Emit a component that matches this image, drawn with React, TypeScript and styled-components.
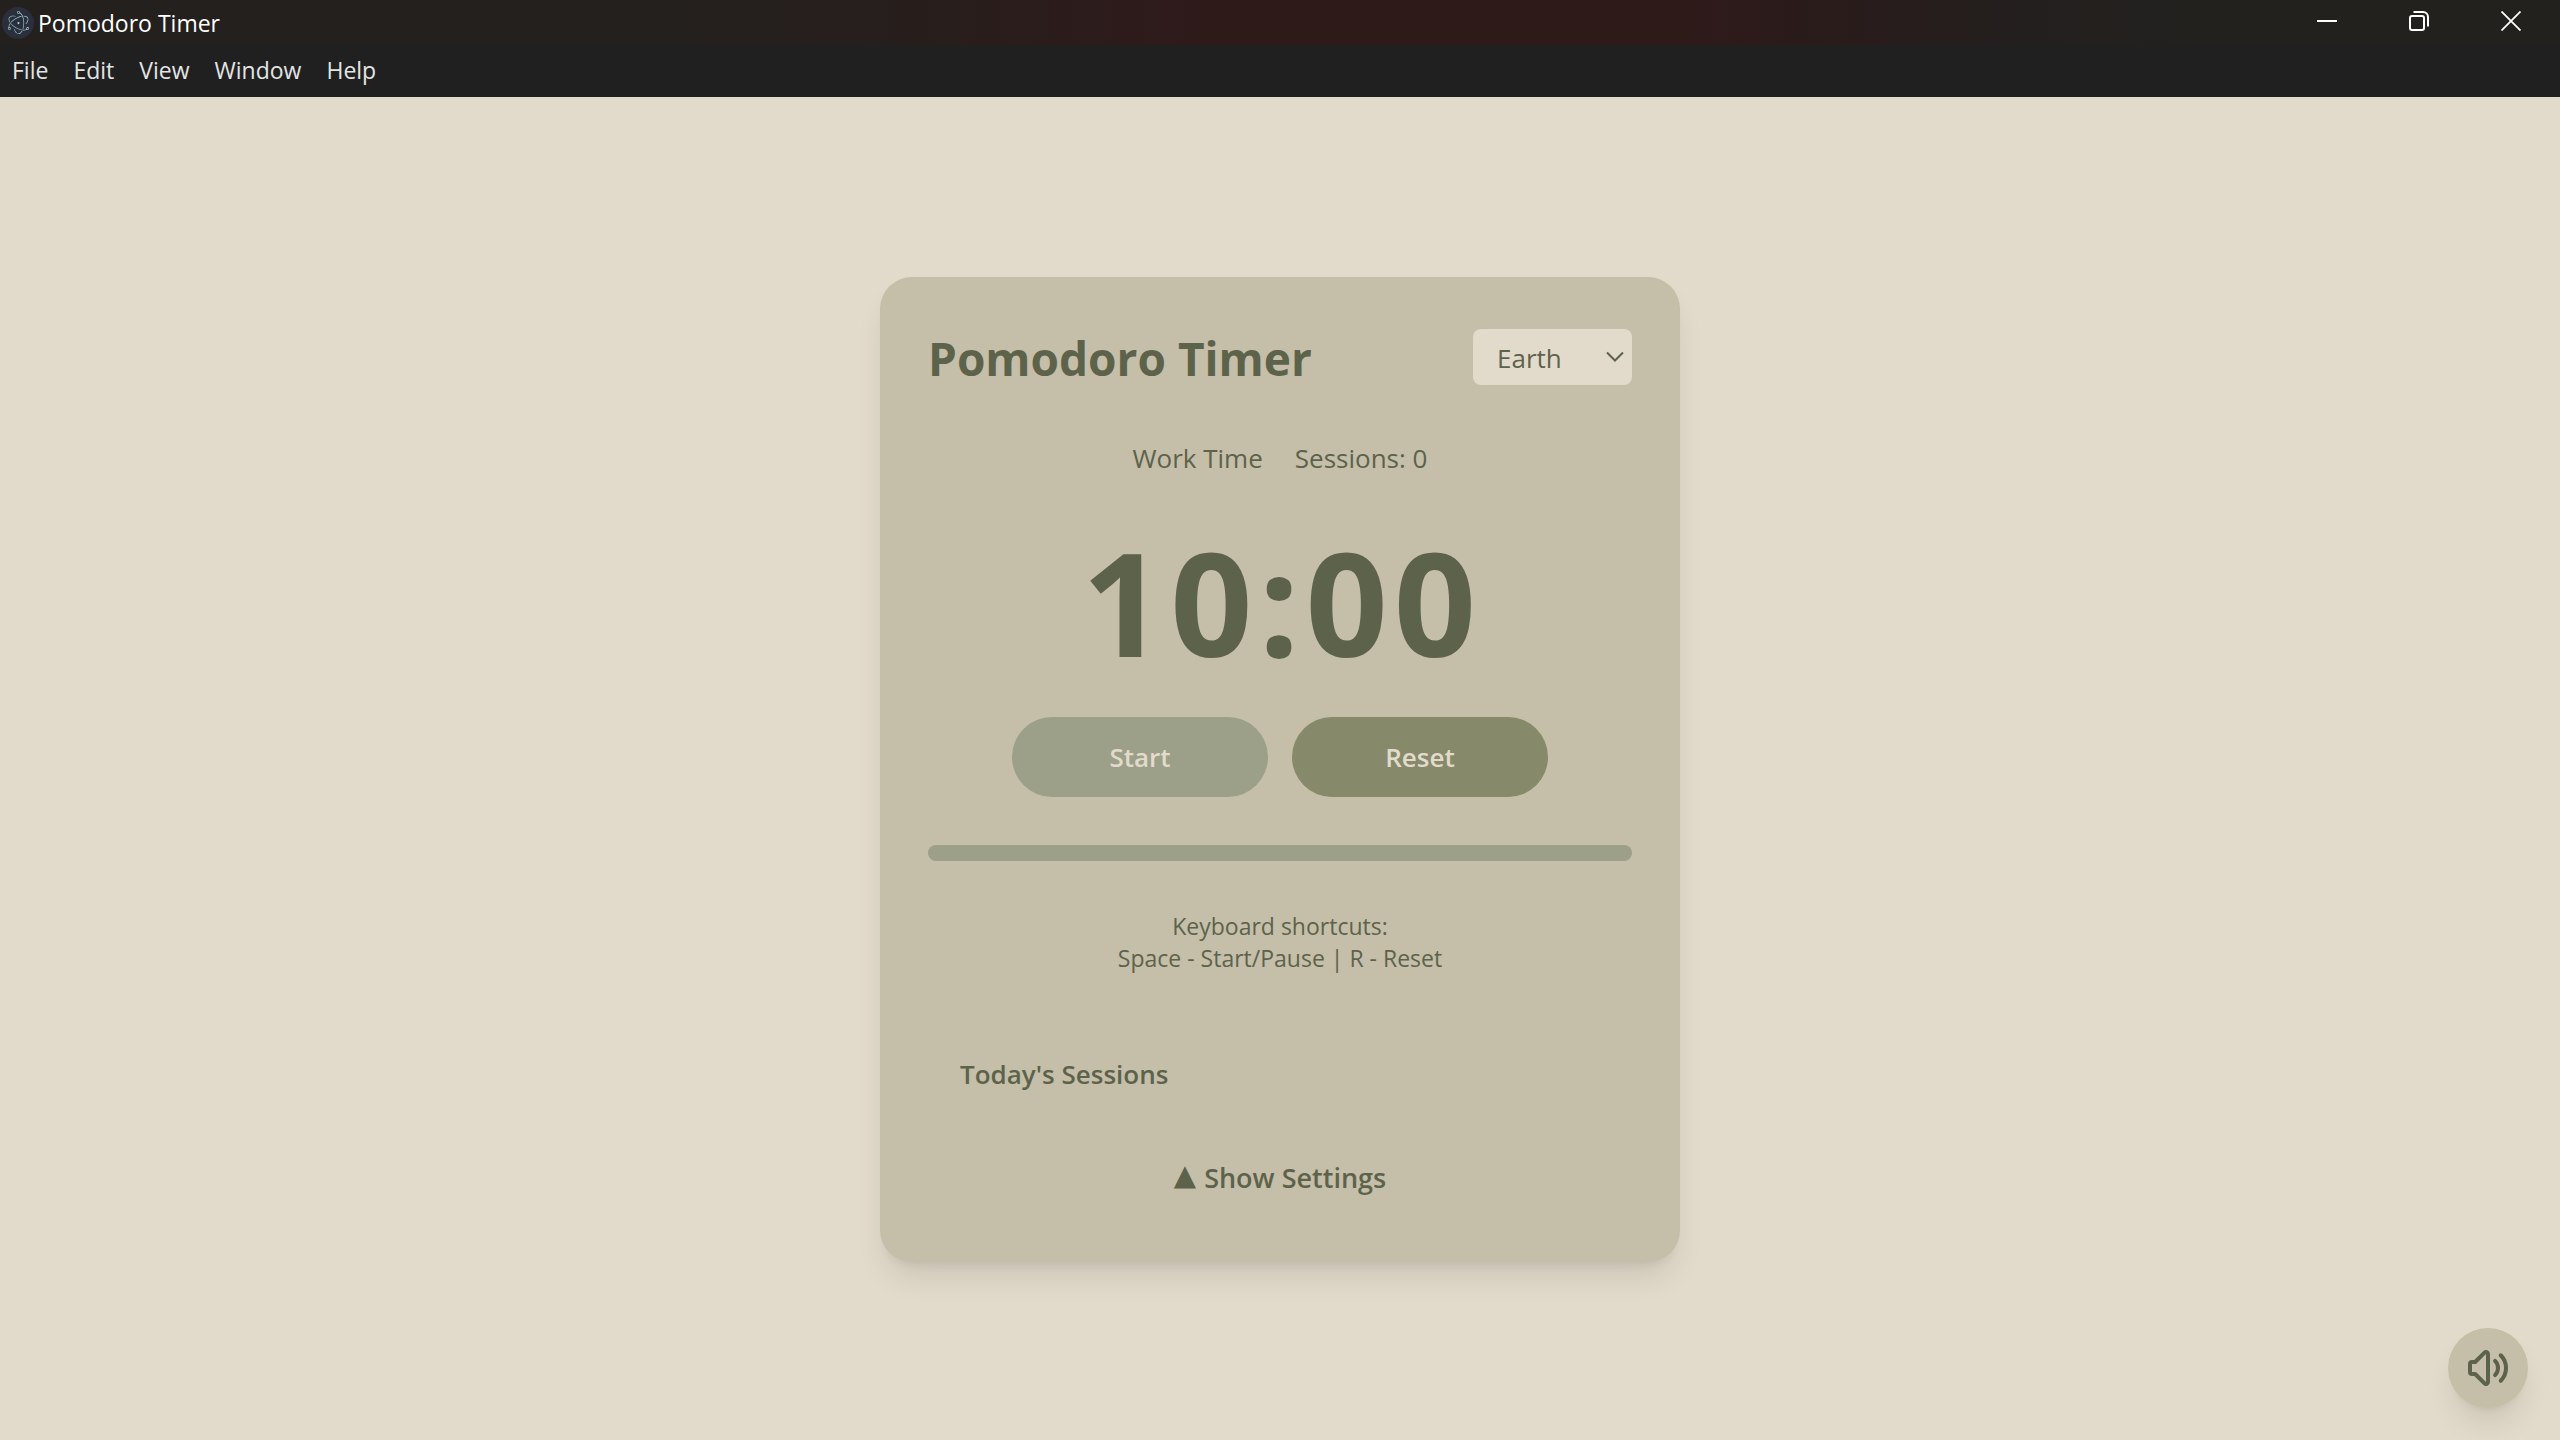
import React, { useState } from "react";
import styled, { createGlobalStyle } from "styled-components";
import { SiElectron } from "react-icons/si";

const color = {
  page: "#e2dbcb",
  card: "#c5bea9",
  ink: "#5d634b",
  sage: "#9ca088",
  olive: "#868a6a",
};

const shadow = "0 20px 30px -6px rgba(0, 0, 0, 0.1), 0 8px 12px -8px rgba(0, 0, 0, 0.1)";

const GlobalStyle = createGlobalStyle`
  *, *::before, *::after { box-sizing: border-box; }
  body {
    margin: 0;
    background: ${color.page};
    color: ${color.ink};
    font-family: "Open Sans", "Noto Sans", sans-serif;
  }
  button, select { font: inherit; color: inherit; border: 0; margin: 0; }
  button { cursor: pointer; }
  h1, h2, p { margin: 0; }
`;

const Window = styled.div`
  display: flex;
  flex-direction: column;
  min-height: 100vh;
`;

const TitleBar = styled.header`
  display: flex;
  align-items: stretch;
  justify-content: space-between;
  height: 45px;
  padding: 0 3px 0 2px;
  color: #fff;
  font-size: 23px;
  background: linear-gradient(
    to right,
    #24201e 26%,
    #271e1c 36%,
    #2f1a1a 47%,
    #2f1a1a 66%,
    #2a1b1a 70%,
    #231f1e 79%,
    #22211e 87%
  );
`;

const AppName = styled.div`
  display: flex;
  align-items: center;
  gap: 4px;
  line-height: 32px;
`;

const AppIcon = styled.span`
  display: grid;
  place-items: center;
  width: 32px;
  height: 32px;
  border-radius: 50%;
  background: #2b2e3b;
  color: #a2d5d9;
`;

const WindowControls = styled.div`
  display: flex;
`;

const ControlButton = styled.button`
  display: grid;
  place-items: center;
  width: 92px;
  padding: 0 0 3px;
  background: none;
`;

const MenuBar = styled.nav`
  display: flex;
  align-items: center;
  gap: 1px;
  height: 52px;
  padding-bottom: 2px;
  background: #202020;
`;

const MenuItem = styled.button`
  padding: 0 12px;
  background: none;
  color: #e4e4e4;
  font-size: 23px;
  line-height: 32px;
`;

const Main = styled.main`
  flex: 1;
  display: grid;
  place-items: center;
  padding: 2px 32px 0;
`;

const Card = styled.section`
  display: flex;
  flex-direction: column;
  gap: 48px;
  width: 100%;
  max-width: 800px;
  padding: 48px;
  border-radius: 32px;
  background: ${color.card};
  box-shadow: ${shadow};
`;

const CardHeader = styled.div`
  display: flex;
  align-items: center;
  justify-content: space-between;
`;

const Title = styled.h1`
  padding-top: 2px;
  font-size: 46px;
  font-weight: 700;
  line-height: 62px;
`;

const ThemePicker = styled.label`
  display: grid;
  align-items: center;
  width: 159px;
  > * { grid-area: 1 / 1; }
  svg { justify-self: end; margin-right: 8px; pointer-events: none; }
`;

const ThemeSelect = styled.select`
  appearance: none;
  width: 100%;
  height: 56px;
  padding: 2px 40px 0 24px;
  border-radius: 8px;
  background: ${color.page};
  font-size: 26px;
`;

const Status = styled.div`
  display: flex;
  justify-content: center;
  gap: 32px;
  padding-top: 2px;
  font-size: 26px;
  line-height: 38px;
`;

const Clock = styled.div`
  height: 144px;
  padding: 4px 0 0 4px;
  text-align: center;
  font-size: 144px;
  font-weight: 700;
  line-height: 144px;
  letter-spacing: 6px;
`;

const Actions = styled.div`
  display: flex;
  justify-content: center;
  gap: 24px;
`;

const ActionButton = styled.button<{ $tone: string }>`
  width: 256px;
  height: 80px;
  border-radius: 40px;
  background: ${(p) => p.$tone};
  color: ${color.page};
  font-size: 26px;
  font-weight: 600;
`;

const Track = styled.div`
  height: 16px;
  border-radius: 8px;
  background: ${color.sage};
`;

const Hint = styled.p`
  padding-top: 1px;
  text-align: center;
  font-size: 23px;
  line-height: 32px;
`;

const Footer = styled.div`
  display: flex;
  flex-direction: column;
  gap: 16px;
`;

const History = styled.section`
  padding: 32px;
`;

const HistoryTitle = styled.h2`
  font-size: 26px;
  font-weight: 600;
  line-height: 40px;
`;

const SettingsToggle = styled.button`
  display: flex;
  align-items: center;
  align-self: center;
  gap: 8px;
  padding: 16px;
  background: none;
  font-size: 27px;
  font-weight: 600;
  line-height: 40px;
`;

const Caret = styled.span`
  padding-bottom: 6px;
  font-family: "DejaVu Sans", sans-serif;
  font-size: 29px;
  font-weight: 400;
  line-height: 34px;
`;

const SoundButton = styled.button`
  position: fixed;
  right: 32px;
  bottom: 32px;
  display: grid;
  place-items: center;
  width: 80px;
  height: 80px;
  padding: 0;
  border-radius: 50%;
  background: ${color.card};
  box-shadow: ${shadow};
`;

const menus = ["File", "Edit", "View", "Window", "Help"];
const themes = ["Earth", "Ocean", "Forest"];

export default function App() {
  const [theme, setTheme] = useState("Earth");
  return (
    <>
      <GlobalStyle />
      <Window>
        <TitleBar>
          <AppName>
            <AppIcon>
              <SiElectron size={23} />
            </AppIcon>
            Pomodoro Timer
          </AppName>
          <WindowControls>
            <ControlButton aria-label="Minimize">
              <svg width="20" height="20" viewBox="0 0 20 20">
                <path d="M0 10h20" stroke="#fff" strokeWidth="2" />
              </svg>
            </ControlButton>
            <ControlButton aria-label="Restore">
              <svg width="20" height="20" viewBox="0 0 20 20" fill="none" stroke="#fff" strokeWidth="2">
                <rect x="1" y="5" width="14" height="14" rx="2" />
                <path d="M4.5 1H14a5 5 0 0 1 5 5v9.500" />
              </svg>
            </ControlButton>
            <ControlButton aria-label="Close">
              <svg width="20" height="20" viewBox="0 0 20 20">
                <path d="M.5.5l19 19M19.500.5l-19 19" stroke="#fff" strokeWidth="1.800" />
              </svg>
            </ControlButton>
          </WindowControls>
        </TitleBar>
        <MenuBar>
          {menus.map((m) => (
            <MenuItem key={m}>{m}</MenuItem>
          ))}
        </MenuBar>
        <Main>
          <Card>
            <CardHeader>
              <Title>Pomodoro Timer</Title>
              <ThemePicker>
                <ThemeSelect aria-label="Theme" value={theme} onChange={(e) => setTheme(e.target.value)}>
                  {themes.map((t) => (
                    <option key={t}>{t}</option>
                  ))}
                </ThemeSelect>
                <svg width="18" height="12" viewBox="0 0 18 12" fill="none" stroke={color.ink} strokeWidth="2">
                  <path d="M1 1.500l8 8 8-8" />
                </svg>
              </ThemePicker>
            </CardHeader>
            <Status>
              <span>Work Time</span>
              <span>Sessions: 0</span>
            </Status>
            <Clock>10:00</Clock>
            <Actions>
              <ActionButton $tone={color.sage}>Start</ActionButton>
              <ActionButton $tone={color.olive}>Reset</ActionButton>
            </Actions>
            <Track role="progressbar" aria-label="Time remaining" aria-valuenow={100} />
            <Hint>
              Keyboard shortcuts:
              <br />
              Space - Start/Pause | R - Reset
            </Hint>
            <Footer>
              <History>
                <HistoryTitle>Today's Sessions</HistoryTitle>
              </History>
              <SettingsToggle>
                <Caret>▲</Caret>
                Show Settings
              </SettingsToggle>
            </Footer>
          </Card>
        </Main>
        <SoundButton aria-label="Sound">
          <svg
            width="48"
            height="48"
            viewBox="0 0 24 24"
            fill="none"
            stroke={color.ink}
            strokeWidth="2"
            strokeLinecap="round"
            strokeLinejoin="round"
          >
            <path d="M15.536 8.464a5 5 0 010 7.072m2.828-9.900a9 9 0 010 12.728M5.586 15H4a1 1 0 01-1-1v-4a1 1 0 011-1h1.586l4.707-4.707C10.923 3.663 12 4.109 12 5v14c0 .891-1.077 1.337-1.707.707L5.586 15z" />
          </svg>
        </SoundButton>
      </Window>
    </>
  );
}
